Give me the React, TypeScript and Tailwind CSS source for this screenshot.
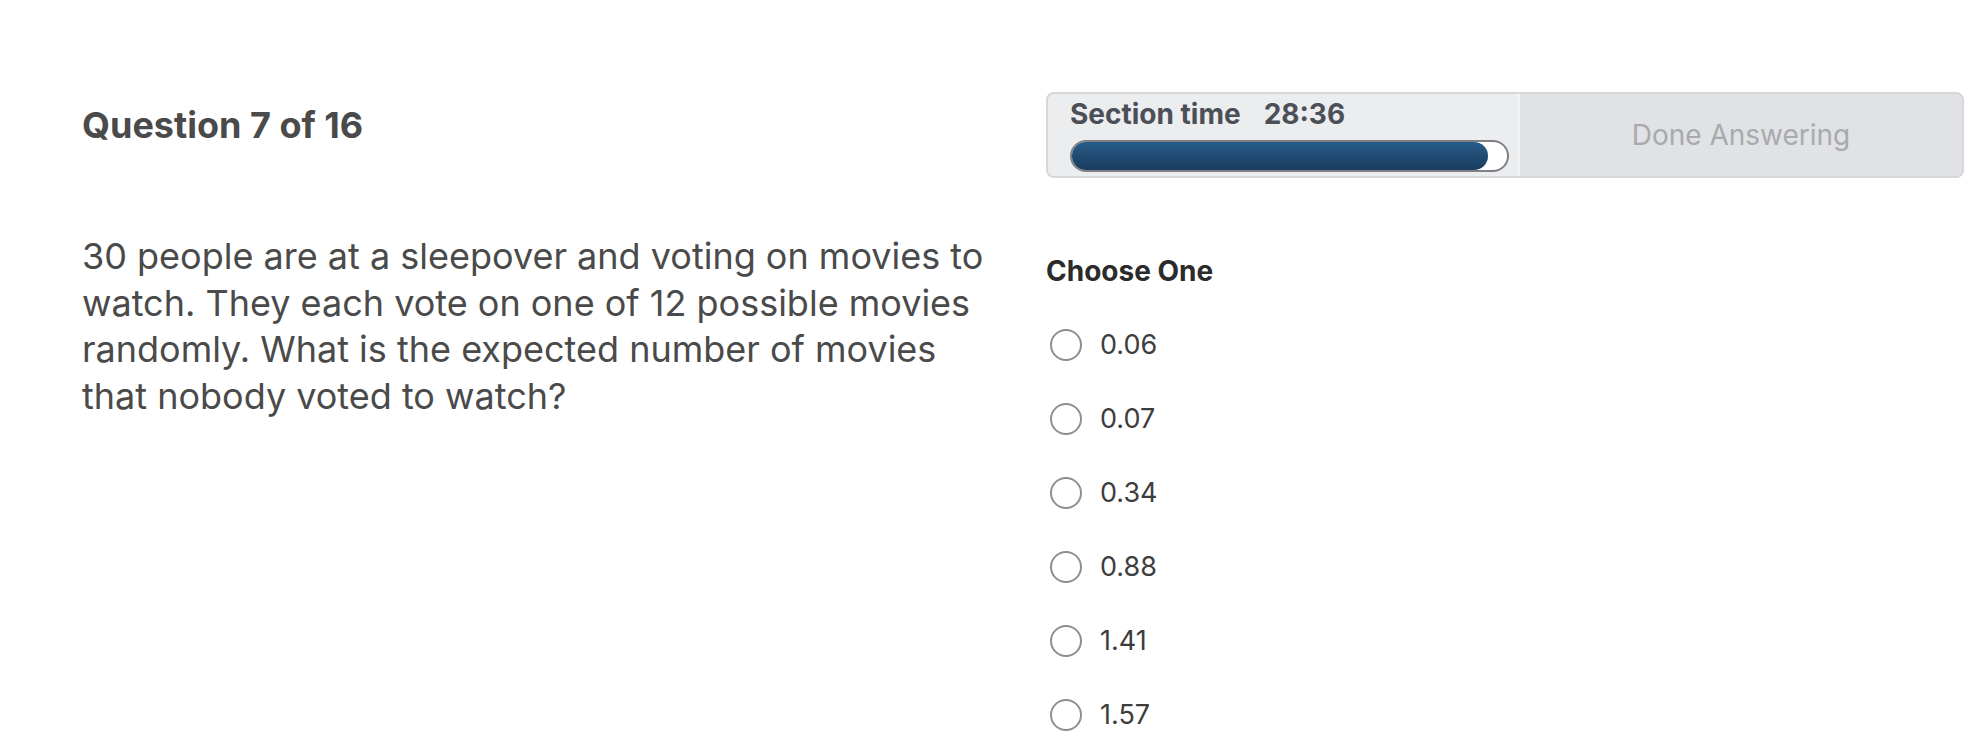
import React from "react";

const options = ["0.06", "0.07", "0.34", "0.88", "1.41", "1.57"];

export default function App() {
  return (
    <div
      className="min-h-[740px] bg-white"
      style={{ fontFamily: "Inter, 'Noto Sans', sans-serif" }}
    >
      <div className="flex gap-[46px] pl-[82px] pt-[92px]">
        {/* Left column */}
        <div className="w-[918px] shrink-0">
          <h1 className="mt-[13px] text-[36px] leading-[40px] font-bold text-[#4a4a4a]">
            Question 7 of 16
          </h1>
          <p className="mt-[88px] w-[908px] text-[36px] leading-[46.5px] text-[#4a4a4a]">
            30 people are at a sleepover and voting on movies to watch. They
            each vote on one of 12 possible movies randomly. What is the
            expected number of movies that nobody voted to watch?
          </p>
        </div>

        {/* Right column */}
        <div className="w-[918px] shrink-0">
          <div className="flex h-[86px] rounded-[8px] border-2 border-[#d6d7d9] bg-[#ecedef]">
            <div className="flex w-[470px] flex-col pl-[22px] pr-[9px] pt-[5px]">
              <div className="flex gap-[23px] text-[28px] leading-[30px] font-bold text-[#4b5058]">
                <span>Section time</span>
                <span>28:36</span>
              </div>
              <div className="mt-[11px] h-[32px] w-[439px] rounded-full border-2 border-[#7e8084] bg-white">
                <div className="h-full w-[95.6%] rounded-full bg-gradient-to-b from-[#265c8a] to-[#1a3c5e]" />
              </div>
            </div>
            <button className="flex flex-1 items-center justify-center rounded-r-[6px] border-l-2 border-[#f3f4f5] bg-[#e1e2e5] text-[28px] text-[#a8aaad]">
              Done Answering
            </button>
          </div>

          <div className="mt-[79px] text-[28px] leading-[28px] font-bold text-[#2b2b2b]">
            Choose One
          </div>

          <div className="mt-[23px] flex flex-col">
            {options.map((o) => (
              <label key={o} className="flex h-[74px] items-center pl-[4px]">
                <span className="h-[32px] w-[32px] shrink-0 rounded-full border-2 border-[#8b9095] bg-white" />
                <span className="ml-[18px] text-[27px] leading-[32px] text-[#3d3d3d]">
                  {o}
                </span>
              </label>
            ))}
          </div>
        </div>
      </div>
    </div>
  );
}
